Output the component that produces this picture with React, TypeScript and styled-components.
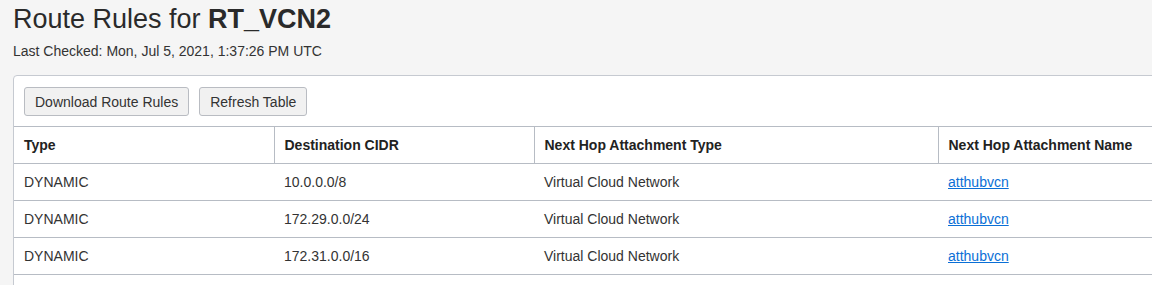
import React from "react";
import styled, { createGlobalStyle } from "styled-components";

const GlobalStyle = createGlobalStyle`
  body {
    margin: 0;
    background-color: #f5f5f5;
    font-family: "Liberation Sans", Arial, sans-serif;
    color: #333;
    overflow: hidden;
  }
`;

const Page = styled.div`
  padding: 3px 0 0 13px;
`;

const Title = styled.h1`
  margin: 0;
  font-size: 27px;
  font-weight: 400;
  line-height: 32px;
  color: #2a2a2a;
  b {
    font-weight: 700;
  }
`;

const Subtitle = styled.div`
  margin-top: 8px;
  font-size: 14px;
  line-height: 17px;
  color: #333;
`;

const Card = styled.div`
  margin-top: 15px;
  width: 1160px;
  padding-bottom: 20px;
  background-color: #fff;
  border: 1px solid #c6cad1;
  border-radius: 4px 0 0 0;
`;

const Toolbar = styled.div`
  display: flex;
  gap: 10px;
  padding: 11px 10px 10px;
`;

const Button = styled.button`
  height: 29px;
  padding: 0 10px;
  font-family: inherit;
  font-size: 14px;
  color: #333;
  background-color: #f1f1f1;
  border: 1px solid #b9bcc2;
  border-radius: 3px;
`;

const Table = styled.table`
  width: 100%;
  border-collapse: collapse;
  table-layout: fixed;
  font-size: 14px;
`;

const Th = styled.th<{ $w: number }>`
  box-sizing: border-box;
  width: ${(p) => p.$w}px;
  height: 37px;
  padding: 0 10px;
  text-align: left;
  font-weight: 700;
  color: #222;
  white-space: nowrap;
  border-top: 1px solid #b7bcc4;
  border-bottom: 1px solid #b7bcc4;
  & + & {
    border-left: 1px solid #b7bcc4;
  }
`;

const Td = styled.td`
  height: 36px;
  padding: 0 10px;
  color: #333;
  border-bottom: 1px solid #b7bcc4;
`;

const Link = styled.a`
  color: #0a6fd6;
  text-decoration: underline;
`;

const rows = [
  { type: "DYNAMIC", cidr: "10.0.0.0/8" },
  { type: "DYNAMIC", cidr: "172.29.0.0/24" },
  { type: "DYNAMIC", cidr: "172.31.0.0/16" },
];

export default function App() {
  return (
    <>
      <GlobalStyle />
      <Page>
        <Title>
          Route Rules for <b>RT_VCN2</b>
        </Title>
        <Subtitle>Last Checked: Mon, Jul 5, 2021, 1:37:26 PM UTC</Subtitle>
        <Card>
          <Toolbar>
            <Button>Download Route Rules</Button>
            <Button>Refresh Table</Button>
          </Toolbar>
          <Table>
            <thead>
              <tr>
                <Th $w={260}>Type</Th>
                <Th $w={260}>Destination CIDR</Th>
                <Th $w={404}>Next Hop Attachment Type</Th>
                <Th $w={236}>Next Hop Attachment Name</Th>
              </tr>
            </thead>
            <tbody>
              {rows.map((r, i) => (
                <tr key={i}>
                  <Td>{r.type}</Td>
                  <Td>{r.cidr}</Td>
                  <Td>Virtual Cloud Network</Td>
                  <Td>
                    <Link href="#">atthubvcn</Link>
                  </Td>
                </tr>
              ))}
            </tbody>
          </Table>
        </Card>
      </Page>
    </>
  );
}
